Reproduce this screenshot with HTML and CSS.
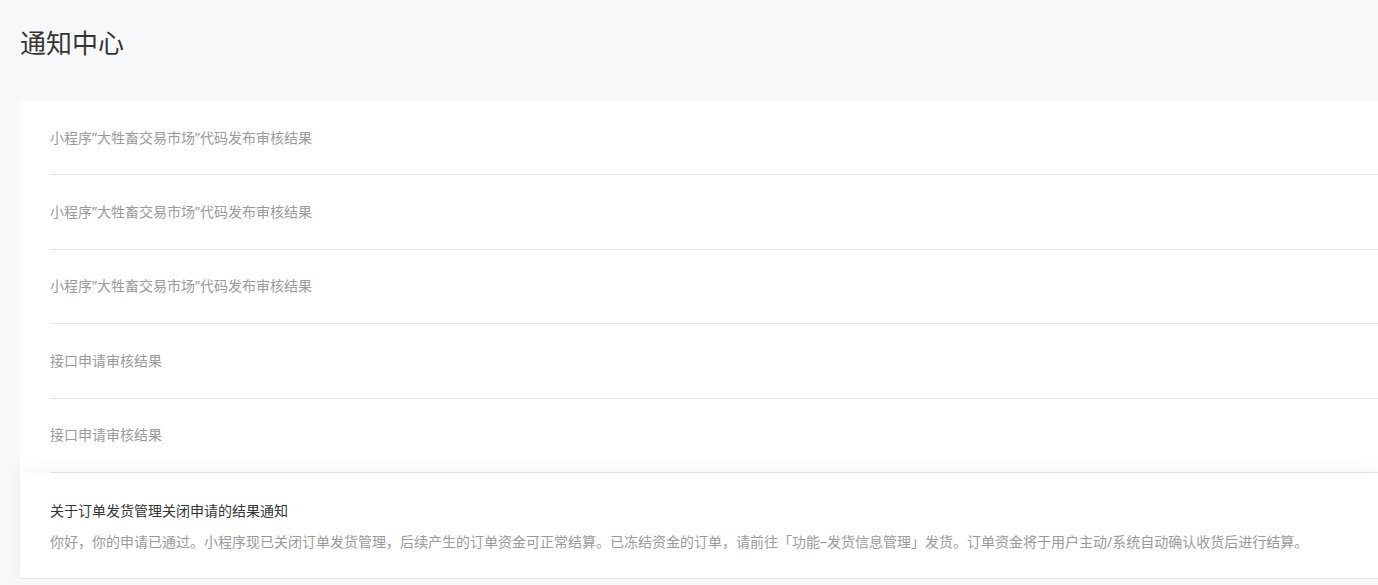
FILE: index.html
```html
<!DOCTYPE html>
<html lang="zh-CN">
<head>
<meta charset="utf-8">
<title>通知中心</title>
<link rel="stylesheet" href="styles.css">
</head>
<body>
<div class="page">
  <h1 class="page-title">通知中心</h1>
  <div class="card">
    <ul class="list">
      <li class="item"><span class="item-title">小程序”大牲畜交易市场”代码发布审核结果</span></li>
      <li class="item"><span class="item-title">小程序”大牲畜交易市场”代码发布审核结果</span></li>
      <li class="item"><span class="item-title">小程序”大牲畜交易市场”代码发布审核结果</span></li>
      <li class="item"><span class="item-title">接口申请审核结果</span></li>
      <li class="item"><span class="item-title">接口申请审核结果</span></li>
      <li class="item item-open">
        <div class="open-title">关于订单发货管理关闭申请的结果通知</div>
        <div class="open-desc">你好，你的申请已通过。小程序现已关闭订单发货管理，后续产生的订单资金可正常结算。已冻结资金的订单，请前往「功能–发货信息管理」发货。订单资金将于用户主动/系统自动确认收货后进行结算。</div>
      </li>
    </ul>
  </div>
</div>
</body>
</html>
```
FILE: styles.css
```css
html, body {
  margin: 0;
  padding: 0;
  background: #f7f8fa;
  overflow: hidden;
}
body {
  font-family: "Noto Sans", "Noto Sans CJK SC", sans-serif;
  color: #333;
}
.page {
  padding: 0 0 0 20px;
}
.page-title {
  margin: 0;
  padding: 25px 0 40px;
  font-size: 26px;
  line-height: 36px;
  font-weight: 400;
  color: #353535;
}
.card {
  background: #fff;
  border-radius: 4px 0 0 0;
}
.list {
  list-style: none;
  margin: 0;
  padding: 0 0 0 30px;
}
.item {
  height: 73.4px;
  display: flex;
  align-items: center;
  border-bottom: 1px solid #e7e7eb;
}
.item-title {
  font-size: 14px;
  line-height: 22px;
  color: #9a9a9a;
}
.item-open {
  position: relative;
  z-index: 1;
  height: auto;
  display: block;
  margin-left: -30px;
  padding: 27px 0 25px 30px;
  background: #fff;
  border-bottom: 1px solid #e4e5ea;
  box-shadow: 0 -2px 18px rgba(0, 0, 0, 0.06);
}
.open-title {
  font-size: 14px;
  line-height: 22px;
  color: #353535;
}
.open-desc {
  margin-top: 9px;
  font-size: 14px;
  line-height: 22px;
  color: #9a9a9a;
  white-space: nowrap;
}
```
